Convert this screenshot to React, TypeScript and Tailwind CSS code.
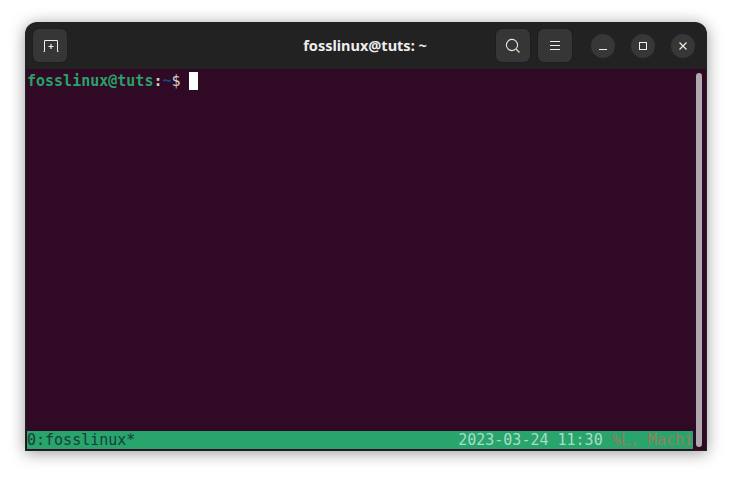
import React from 'react';

function HeaderButton({ children }: { children: React.ReactNode }) {
  return (
    <button className="flex h-[33px] w-[34px] items-center justify-center rounded-[6px] bg-[#363636] shadow-[0_0_0_1px_#1e1e1e]">
      {children}
    </button>
  );
}

function WindowButton({ children }: { children: React.ReactNode }) {
  return (
    <button className="flex h-6 w-6 items-center justify-center rounded-full bg-[#373737]">
      {children}
    </button>
  );
}

export default function App() {
  return (
    <div className="h-[479px] w-[732px] overflow-hidden bg-white pl-[25px] pt-[22px] font-['Liberation_Sans',sans-serif]">
      {/* Terminal window */}
      <div className="flex h-[429px] w-[682px] flex-col overflow-hidden rounded-t-[12px] bg-[#222222] shadow-[0_2px_16px_rgba(0,0,0,0.4)]">
        {/* Title bar */}
        <div className="grid h-[47px] shrink-0 grid-cols-[1fr_auto_1fr] items-center pl-[8px] pr-[12px]">
          <div className="flex">
            <HeaderButton>
              <svg width="16" height="12" viewBox="0 0 16 12" fill="none" stroke="#f0f0f0" strokeWidth="1" className="ml-[1px] mt-[1px]">
                <path d="M0.5 11.5H1.5V0.5H14.5V11.5H15.5" />
                <path d="M8 4V9M5.5 6.5H10.5" strokeWidth="1.2" />
              </svg>
            </HeaderButton>
          </div>
          <div className="pl-[2px] text-center text-[14.5px] font-bold text-[#eeeeee] font-['Noto_Sans',sans-serif]">
            fosslinux@tuts: ~
          </div>
          <div className="flex items-center justify-end">
            <div className="flex items-center gap-[8px]">
              <HeaderButton>
                <svg width="16" height="16" viewBox="0 0 16 16" fill="none" stroke="#e8e8e8" strokeWidth="1.1">
                  <circle cx="7" cy="7" r="5.6" />
                  <path d="M11 11L14.5 14.5" stroke="#d8cfa8" strokeWidth="1.4" />
                </svg>
              </HeaderButton>
              <HeaderButton>
                <svg width="12" height="10" viewBox="0 0 12 10" fill="none" stroke="#eeeeee" strokeWidth="1">
                  <path d="M1 0.5H11M1 4.5H11M1 8.5H11" />
                </svg>
              </HeaderButton>
            </div>
            <div className="ml-[19px] flex items-center gap-[16px]">
              <WindowButton>
                <svg width="10" height="10" viewBox="0 0 10 10" fill="none" stroke="#eeeeee" strokeWidth="1.2">
                  <path d="M1 8.5H9" />
                </svg>
              </WindowButton>
              <WindowButton>
                <svg width="10" height="10" viewBox="0 0 10 10" fill="none" stroke="#eeeeee" strokeWidth="1">
                  <rect x="1.5" y="1.5" width="7" height="7" />
                </svg>
              </WindowButton>
              <WindowButton>
                <svg width="10" height="10" viewBox="0 0 10 10" fill="none" stroke="#f0ebdc" strokeWidth="1.2">
                  <path d="M1.5 1.5L8.5 8.5M8.5 1.5L1.5 8.5" />
                </svg>
              </WindowButton>
            </div>
          </div>
        </div>

        {/* Terminal body */}
        <div className="flex min-h-0 flex-1 border-x border-b border-[#222222] bg-[#300a24] font-['DejaVu_Sans_Mono',monospace] text-[15px] leading-[19px]">
          <div className="flex min-w-0 flex-1 flex-col pb-[1px] pl-[1px]">
            <div className="flex flex-1 items-start pt-[3px]">
              <span className="font-bold text-[#26a269]">fosslinux@tuts</span>
              <span className="font-bold text-[#d0d0d0]">:</span>
              <span className="font-bold text-[#12488b]">~</span>
              <span className="text-[#d0cfcc]">$</span>
              <span className="ml-[8px] h-[18px] w-[9px] bg-white" />
            </div>
            {/* tmux status line */}
            <div className="flex h-[18px] items-center justify-between whitespace-nowrap bg-[#28a46c] text-[#17403a]">
              <span>0:fosslinux*</span>
              <span>
                <span className="text-[#a8dcc8]">2023-03-24 11:30 </span>
                <span className="text-[#96805a]">%L, Machi</span>
              </span>
            </div>
          </div>
          {/* Scrollbar */}
          <div className="w-[13px] shrink-0 px-[3px] pb-[3px] pt-[4px]">
            <div className="h-full w-[6px] rounded-full bg-[#aeaaad]" />
          </div>
        </div>
      </div>
    </div>
  );
}
